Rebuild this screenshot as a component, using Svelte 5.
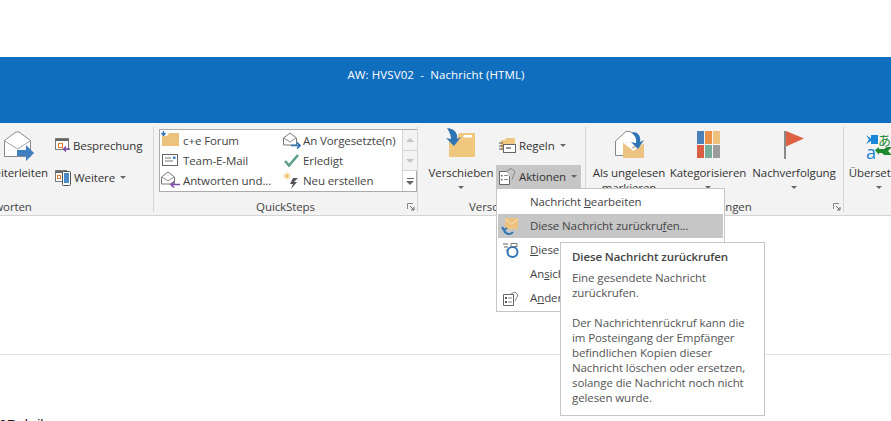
<script>
  const tipLines = ['Der Nachrichtenrückruf kann die','im Posteingang der Empfänger','befindlichen Kopien dieser','Nachricht löschen oder ersetzen,','solange die Nachricht noch nicht','gelesen wurde.'];
</script>

<div class="page">
  <div class="top"></div>
  <header class="title"><span>AW: HVSV02&nbsp; - &nbsp;Nachricht (HTML)</span></header>

  <section class="ribbon">
    <div class="group g1">
      <div class="content">
        <div class="big fwd">
          <svg width="30" height="30" viewBox="0 0 30 30"><path d="M.5 9.500 12 1h3l11.500 8.500v16H.5z" fill="#fff" stroke="#8a8a8a"/><path d="M1 10l12.500 8L26 10" fill="none" stroke="#a0a0a0"/><path d="M13 19h9v-5l8 8-8 8v-5h-9z" fill="#3f7fbf"/></svg>
          <span>Weiterleiten</span>
        </div>
        <div class="smalls">
          <div class="small">
            <svg width="15" height="15" viewBox="0 0 15 15"><rect x=".5" y=".5" width="13" height="11" fill="#fff" stroke="#777"/><path d="M1 1h12v2H1z" fill="#666"/><rect x="3.500" y="5.500" width="4" height="4" fill="#fff" stroke="#e07b2e"/><path d="M15 11H8.500M11 8.500 8.500 11l2.500 2.500" fill="none" stroke="#7d4fa8" stroke-width="1.500"/></svg>
            <span>Besprechung</span>
          </div>
          <div class="small">
            <svg width="16" height="17" viewBox="0 0 16 17"><rect x=".5" y="1.500" width="11" height="11" fill="#fff" stroke="#777"/><path d="M1 2h10v2H1z" fill="#666"/><rect x="2.500" y="6.500" width="3" height="3" fill="#fff" stroke="#e07b2e"/><rect x="7.500" y="2.500" width="8" height="14" rx="1" fill="#fff" stroke="#555"/><rect x="9" y="4" width="5" height="10" fill="#4a8ac6"/></svg>
            <span>Weitere</span><i class="caret"></i>
          </div>
        </div>
      </div>
      <div class="label">Antworten</div>
    </div>

    <div class="group g2">
      <div class="content">
        <div class="gallery">
          <div class="steps">
            <div class="step">
              <svg width="19" height="18" viewBox="0 0 19 18"><path d="M1 15V5h5l2-3h10v13z" fill="#ecc27d"/><path d="M2.500 0v3.500M.5 2l2 2.500 2-2.500" fill="none" stroke="#2e6fb5" stroke-width="1.300"/></svg>
              <span>c+e Forum</span>
            </div>
            <div class="step">
              <svg width="19" height="13" viewBox="0 0 19 13"><rect x="1.500" y=".5" width="15" height="11" fill="#fff" stroke="#666"/><path d="M4 4h6M4 7h8" stroke="#777"/><rect x="12" y="2.500" width="2.500" height="2.500" fill="#3f7fbf"/></svg>
              <span>Team-E-Mail</span>
            </div>
            <div class="step">
              <svg width="19" height="18" viewBox="0 0 19 18"><path d="M.5 6 7 1l6.500 5v7H.5z" fill="#fff" stroke="#777"/><path d="M1 6l6 4 6-4" fill="none" stroke="#888"/><path d="M19 13.500h-9M13 10.500l-3 3 3 3" fill="none" stroke="#7d4fa8" stroke-width="1.600"/></svg>
              <span>Antworten und...</span>
            </div>
          </div>
          <div class="steps second">
            <div class="step">
              <svg width="18" height="17" viewBox="0 0 18 17"><path d="M.5 6 7 1l6.500 5v7H.5z" fill="#fff" stroke="#777"/><path d="M1 6l6 4 6-4" fill="none" stroke="#888"/><path d="M8 13.500h8.500M14 10.500l3 3-3 3" fill="none" stroke="#2e6fb5" stroke-width="1.600"/></svg>
              <span>An Vorgesetzte(n)</span>
            </div>
            <div class="step">
              <svg width="18" height="13" viewBox="0 0 18 13"><path d="M2 7l4 4.500L15 1" fill="none" stroke="#5c9f8d" stroke-width="2.600"/></svg>
              <span>Erledigt</span>
            </div>
            <div class="step">
              <svg width="18" height="17" viewBox="0 0 18 17"><path d="M10 6h5l-4 4h3l-6 7 2-5H7z" fill="#555"/><circle cx="4" cy="4" r="1.600" fill="#efb95a"/><path d="M4 0v8M0 4h8M1.300 1.300l5.400 5.400M6.700 1.300 1.300 6.700" stroke="#efb95a" stroke-width=".7"/></svg>
              <span>Neu erstellen</span>
            </div>
          </div>
          <div class="scroll">
            <div class="sb off"><i class="up"></i></div>
            <div class="sb off"><i class="down"></i></div>
            <div class="sb more"><b></b><i class="down"></i></div>
          </div>
        </div>
      </div>
      <div class="label">QuickSteps</div>
      <svg class="launch" width="8" height="8" viewBox="0 0 8 8"><path d="M.5 6V.5H6" fill="none" stroke="#888"/><path d="M3 3l4 4M7 4v3H4" fill="none" stroke="#666"/></svg>
    </div>

    <div class="group g3">
      <div class="content">
        <div class="big move">
          <svg width="30" height="30" viewBox="0 0 30 30"><path d="M3 29V13h7l3-8h16v24z" fill="#efc77f"/><path d="M18 7h8v2.500h-9z" fill="#fff"/><path d="M1 0c8 1 11 5 10 11l4-2-7 9-8-8 5 1C5 7 3 3 1 0z" fill="#2f74b5"/></svg>
          <span>Verschieben</span>
          <i class="caret under"></i>
        </div>
        <div class="smalls tight">
          <div class="small rule">
            <svg width="17" height="16" viewBox="0 0 17 16"><path d="M2 13V3h4l1-2h9v12z" fill="#efc77f"/><rect x="4.500" y="7.500" width="12" height="8" fill="#fff" stroke="#666"/><path d="M7 11h5" stroke="#333"/><path d="M0 6h4M0 9h4M0 12h4" stroke="#555"/></svg>
            <span>Regeln</span><i class="caret"></i>
          </div>
          <div class="small act">
            <svg width="17" height="18" viewBox="0 0 17 18"><path d="M.5 3.500h10v13H.5z" fill="#fff" stroke="#666"/><path d="M2 7h1.500v1.500H2zM2 11h1.500v1.500H2z" fill="#555"/><path d="M5 7.500h4M5 11.500h4" stroke="#888"/><path d="M7 3.500l5-3 4 3-3 8" fill="#c6c6c6" stroke="#888"/></svg>
            <span>Aktionen</span><i class="caret"></i>
          </div>
        </div>
      </div>
      <div class="label">Verschieben</div>
    </div>

    <div class="group g4">
      <div class="content">
        <div class="big unread">
          <svg width="29" height="28" viewBox="0 0 29 28"><path d="M.5 10 11 .5h4l8 6v6l-15 12H.5z" fill="#fff" stroke="#888"/><path d="M8 10l10 8 11-8v17H8z" fill="#ecc383"/><path d="M8 11l10.500 8L29 11" fill="none" stroke="#fff" stroke-width="1.500"/><path d="M17 1c7 0 9 5 8 10l4-2-6 9-7-7 5 1c1-5-2-8-4-11z" fill="#2f74b5"/></svg>
          <span>Als ungelesen<br/>markieren</span>
        </div>
        <div class="big cat">
          <svg width="23" height="28" viewBox="0 0 23 28"><rect width="7" height="13" fill="#4a80b8"/><rect x="8" width="7" height="13" fill="#ea9149"/><rect x="16" width="7" height="13" fill="#eec27e"/><rect y="14" width="7" height="13" fill="#d95f42"/><rect x="8" y="14" width="7" height="13" fill="#78ad9c"/><rect x="16" y="14" width="7" height="13" fill="#9c9c9c"/></svg>
          <span>Kategorisieren</span>
          <i class="caret under"></i>
        </div>
        <div class="big flag">
          <svg width="20" height="28" viewBox="0 0 20 28"><rect width="2" height="28" fill="#8a8a8a"/><path d="M2 0l18 7.500L2 15.500z" fill="#dd6142"/></svg>
          <span>Nachverfolgung</span>
          <i class="caret under"></i>
        </div>
      </div>
      <div class="label">Markierungen</div>
      <svg class="launch" width="8" height="8" viewBox="0 0 8 8"><path d="M.5 6V.5H6" fill="none" stroke="#888"/><path d="M3 3l4 4M7 4v3H4" fill="none" stroke="#666"/></svg>
    </div>

    <div class="group g5">
      <div class="content">
        <div class="big trans">
          <svg width="26" height="28" viewBox="0 0 26 28"><path d="M0 3l5 3.500V3h7v9H5V9l-5 3 3-4.500z" fill="#1a86d8"/><text x="0" y="27" class="latin">a</text><path d="M9 18l4-3v2h5l3-2 5 0-4 4 4 4h-8l-2-2h-3v2z" fill="#1f8a30"/><text x="12" y="13" class="kana">あ</text></svg>
          <span>Übersetzen</span>
          <i class="caret under"></i>
        </div>
      </div>
    </div>
  </section>

  <main class="body">
    <div class="rule-line"></div>
    <p class="subject">0Rubrik</p>
  </main>

  <div class="menu">
    <div class="item">Nachricht <u>b</u>earbeiten</div>
    <div class="item hot">
      <svg width="20" height="20" viewBox="0 0 20 20"><rect x="5" y="2" width="13" height="11" fill="#edc27e"/><path d="M5 3l6.500 5L18 3" fill="none" stroke="#f8e3bd"/><path d="M4 13a5 5 0 0 0 9 3M2 11l2 3 3-2" fill="none" stroke="#2f74b5" stroke-width="2"/></svg>
      <span>Diese Nachricht zurückru<u>f</u>en...</span>
    </div>
    <div class="item">
      <svg width="20" height="20" viewBox="0 0 20 20"><path d="M3 4h5M4 7h4M6 10h2" stroke="#666"/><circle cx="12.500" cy="12" r="5" fill="none" stroke="#2f74b5" stroke-width="2"/><path d="M11 3.500h6v3h-6z" fill="#fff" stroke="#777"/></svg>
      <span><u>D</u>iese Nachricht erneut senden...</span>
    </div>
    <div class="item">An<u>s</u>icht in Browser</div>
    <div class="item">
      <svg width="20" height="20" viewBox="0 0 20 20"><path d="M3.500 6.500h10v11h-10z" fill="#fff" stroke="#666"/><path d="M5 9h2v2H5zM5 13h2v2H5z" fill="#555"/><path d="M8 10h4M8 14h4" stroke="#888"/><path d="M10 6.500l5-2.500 3 3-3 6" fill="none" stroke="#888"/></svg>
      <span>A<u>n</u>dere Aktionen</span>
    </div>
  </div>

  <aside class="tip">
    <h4>Diese Nachricht zurückrufen</h4>
    <p>Eine gesendete Nachricht<br/>zurückrufen.</p>
    <p class="more-text">{#each tipLines as l}{l}<br/>{/each}</p>
  </aside>
</div>

<style>
  :global(body) { margin: 0; overflow: hidden; background: #fff; }
  .page { width: 891px; height: 421px; overflow: hidden; position: relative; font: 11.5px/15px "Open Sans", "Noto Sans", sans-serif; letter-spacing: -.1px; color: #444; }
  .top { height: 57px; }
  .title { height: 66px; background: #106ebe; color: #fff; display: flex; justify-content: center; padding: 10px 19px 0 0; box-sizing: border-box; letter-spacing: .1px; }
  .ribbon { height: 93px; background: #f3f3f3; border-bottom: 1px solid #d4d4d4; display: flex; box-sizing: border-box; padding-top: 4px; }
  .group { position: relative; height: 85px; flex: none; border-right: 1px solid #d6d6d6; box-sizing: border-box; }
  .content { height: 73px; display: flex; }
  .label { height: 12px; line-height: 14px; text-align: center; }
  .launch { position: absolute; right: 2px; bottom: 1px; }
  .g1 { width: 299px; margin-left: -145px; }
  .g1 .content { justify-content: flex-end; padding-right: 11px; }
  .g2 { width: 264px; }
  .g3 { width: 168px; }
  .g4 { width: 258px; }
  .g5 { width: 60px; border: 0; }
  .big { display: flex; flex-direction: column; align-items: center; flex: none; white-space: nowrap; color: #333; }
  .big svg { flex: none; display: block; }
  .big span { text-align: center; }
  .fwd { width: 62px; margin-right: 5px; padding-top: 4px; }
  .fwd svg { margin-left: 6px; }
  .fwd span { margin-top: 4px; }
  .smalls { width: 90px; padding: 8px 0 0 3px; box-sizing: border-box; display: flex; flex-direction: column; gap: 12px; }
  .small { display: flex; align-items: center; gap: 3px; height: 20px; color: #333; white-space: nowrap; }
  .small svg { flex: none; }
  .caret { width: 0; height: 0; border: 3px solid transparent; border-top: 3px solid #666; border-bottom: 0; margin-left: 2px; display: block; flex: none; }
  .caret.under { margin: 6px 0 0; }
  .gallery { display: grid; grid-template-columns: 122px 120px 15px; width: 258px; height: 63px; margin: 2px 0 0 5px; background: #fff; border: 1px solid #ababab; box-sizing: border-box; }
  .steps { display: flex; flex-direction: column; padding: 0 0 0 1px; }
  .step { height: 20px; display: flex; align-items: center; white-space: nowrap; color: #444; }
  .step svg { flex: none; margin-right: 3px; }
  .second .step svg { margin-right: 2px; }
  .scroll { display: flex; flex-direction: column; border-left: 1px solid #d4d4d4; }
  .sb { flex: 1; display: flex; flex-direction: column; align-items: center; justify-content: center; gap: 2px; border-bottom: 1px solid #d4d4d4; }
  .sb.off { background: #f3f3f3; }
  .sb:last-child { border: 0; }
  .sb i { width: 0; height: 0; border: 4px solid transparent; display: block; }
  .sb .up { border-top: 0; border-bottom: 4px solid #c4c4c4; }
  .sb .down { border-bottom: 0; border-top: 4px solid #c4c4c4; }
  .more .down { border-top-color: #666; }
  .more b { width: 7px; height: 1px; background: #666; display: block; }
  .move { width: 66px; margin-left: 10px; padding-top: 1px; }
  .move span { margin-top: 7px; }
  .tight { width: 85px; margin-left: 2px; padding: 8px 0 0; gap: 10px; }
  .rule { padding-left: 3px; }
  .act { height: 23px; background: #c6c6c6; padding-left: 3px; }
  .unread { width: 80px; margin-left: 3px; padding-top: 4px; }
  .unread span { margin-top: 6px; }
  .cat { width: 78px; padding-top: 4px; }
  .cat span { margin-top: 6px; }
  .flag { width: 94px; padding-top: 4px; }
  .flag span { margin-top: 6px; }
  .trans { width: 70px; padding-top: 5px; }
  .trans span { margin-top: 5px; }
  .kana { font: 13px "Noto Sans CJK JP", sans-serif; fill: #1f8a30; }
  .latin { font: 18px "Open Sans", sans-serif; fill: #1a86d8; }
  .body { height: 205px; }
  .rule-line { height: 1px; background: #e4e4e4; margin-top: 138px; }
  .subject { margin: 60px 0 0 -1px; font: 14px/20px "Liberation Sans", sans-serif; letter-spacing: 0; color: #222; }
  .menu { position: absolute; left: 496px; top: 188px; width: 229px; height: 124px; box-sizing: border-box; background: #fff; border: 1px solid #c6c6c6; padding: 1px; }
  .item { height: 24px; box-sizing: border-box; display: flex; align-items: center; padding: 0 0 2px 32px; position: relative; white-space: pre; color: #444; }
  .item svg { position: absolute; left: 2px; top: 2px; }
  .item.hot { background: #c6c6c6; }
  .tip { position: absolute; left: 560px; top: 242px; width: 205px; height: 174px; box-sizing: border-box; background: #fff; border: 1px solid #c6c6c6; padding: 6px 11px; color: #555; }
  .tip h4 { margin: 0 0 6px; font: 600 11.5px/15px "Open Sans", sans-serif; color: #444; }
  .tip p { margin: 0; }
  .more-text { margin-top: 15px !important; }
</style>
